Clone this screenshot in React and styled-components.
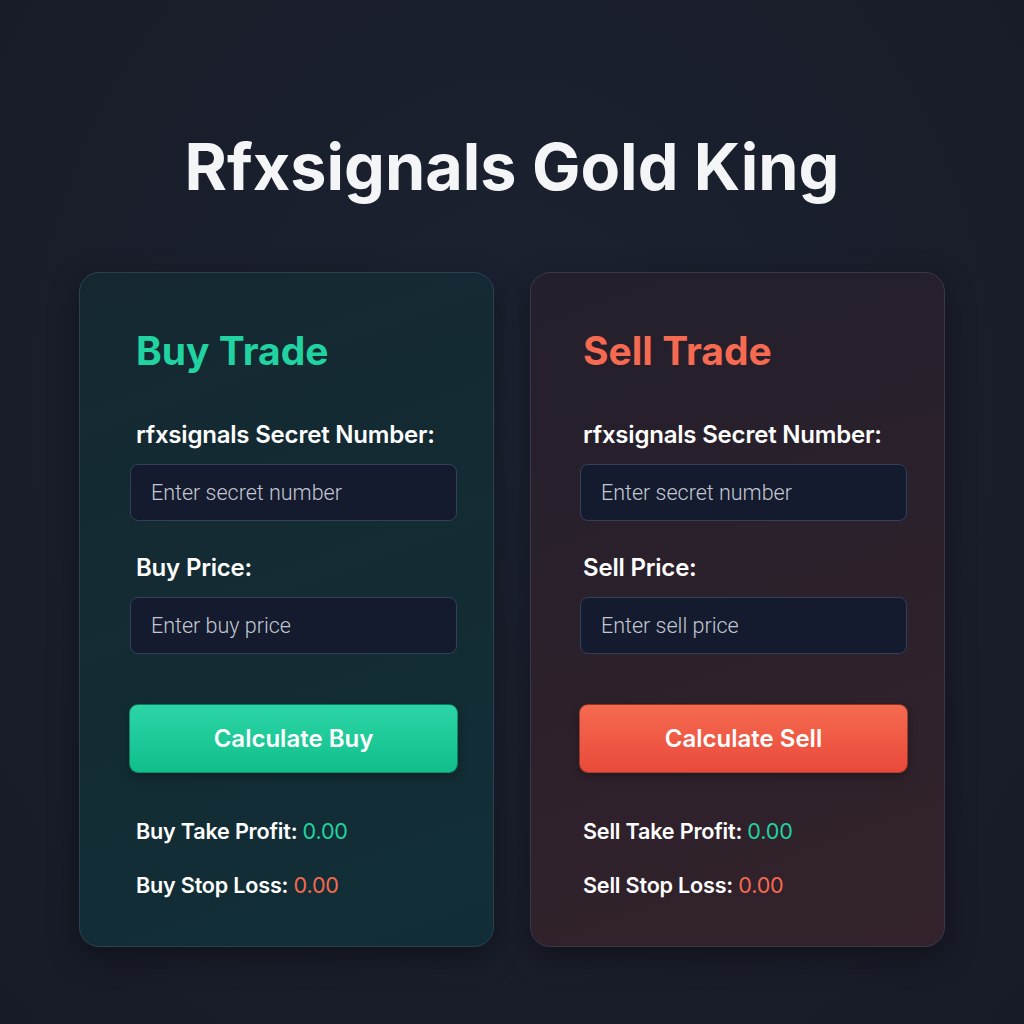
import React from 'react'
import styled, { createGlobalStyle } from 'styled-components'

const Global = createGlobalStyle`
  html, body {
    margin: 0;
    padding: 0;
    background: #1a1f2d;
  }
  body {
    font-family: Inter, "Noto Sans", sans-serif;
    color: #fff;
  }
`

const Page = styled.div`
  min-height: 1024px;
  display: flex;
  flex-direction: column;
  align-items: center;
  padding-top: 128px;
  box-sizing: border-box;
  background: radial-gradient(ellipse at 50% 40%, #1c2231 0%, #191d2a 70%, #171b27 100%);
`

const Title = styled.h1`
  margin: 0;
  font-size: 64.7px;
  line-height: 78px;
  font-weight: 700;
  color: #f4f5f7;
`

const Cards = styled.div`
  display: flex;
  gap: 36px;
  margin-top: 66px;
`

const Card = styled.div`
  width: 415px;
  height: 675px;
  box-sizing: border-box;
  padding: 55px 36px 0 ${({ side }) => (side === 'buy' ? '50px' : '49px')};
  border-radius: 20px;
  border: 1px solid ${({ side }) => (side === 'buy' ? '#2b4150' : '#3a3748')};
  background: ${({ side }) =>
    side === 'buy'
      ? 'linear-gradient(160deg, #152832 0%, #132c34 55%, #112e36 100%)'
      : 'linear-gradient(160deg, #231f2c 0%, #2c212b 55%, #33222b 100%)'};
  box-shadow: 0 10px 30px rgba(0, 0, 0, 0.35);
  display: flex;
  flex-direction: column;
`

const Heading = styled.h2`
  margin: 0 0 0 ${({ side }) => (side === 'buy' ? '6px' : '3px')};
  font-size: 39px;
  line-height: 46px;
  font-weight: 700;
  color: ${({ side }) => (side === 'buy' ? '#20d3a0' : '#f56a50')};
`

const Label = styled.label`
  display: block;
  margin: ${({ first }) => (first ? '46px' : '32px')} 0 14px ${({ side }) => (side === 'buy' ? '6px' : '3px')};
  font-size: 24px;
  line-height: 30px;
  font-weight: 600;
  letter-spacing: -0.2px;
  color: #fff;
`

const Input = styled.input`
  width: 327px;
  height: 57px;
  box-sizing: border-box;
  padding: 0 20px;
  border-radius: 8px;
  border: 1px solid #343f5e;
  background: #141b2e;
  color: #dfe3ea;
  font-family: Roboto, "Noto Sans", sans-serif;
  font-weight: 300;
  font-size: 21.5px;
  outline: none;
  &::placeholder {
    color: #c3c8d3;
  }
`

const Button = styled.button`
  margin-top: 50px;
  margin-left: -1px;
  width: 329px;
  height: 69px;
  border-radius: 9px;
  border: 1px solid rgba(0, 0, 0, 0.35);
  background: ${({ side }) =>
    side === 'buy'
      ? 'linear-gradient(180deg, #2dd5a6 0%, #0fbf8b 100%)'
      : 'linear-gradient(180deg, #f66b50 0%, #e9493a 100%)'};
  color: #fff;
  font-family: Inter, "Noto Sans", sans-serif;
  font-size: 24px;
  font-weight: 600;
  cursor: pointer;
  box-shadow: 0 4px 10px rgba(0, 0, 0, 0.25);
`

const Result = styled.p`
  margin: ${({ first }) => (first ? '45px' : '27px')} 0 0 ${({ side }) => (side === 'buy' ? '6px' : '3px')};
  font-size: 21.6px;
  line-height: 27px;
  font-weight: 600;
  letter-spacing: -0.2px;
  color: #fff;
`

const Value = styled.span`
  font-weight: 400;
  color: ${({ tone }) => (tone === 'profit' ? '#20d3a0' : '#f56a50')};
`

function TradeCard({ side }) {
  const name = side === 'buy' ? 'Buy' : 'Sell'
  const lower = name.toLowerCase()
  return (
    <Card side={side}>
      <Heading side={side}>{name} Trade</Heading>
      <Label side={side} first>rfxsignals Secret Number:</Label>
      <Input placeholder="Enter secret number" />
      <Label side={side}>{name} Price:</Label>
      <Input placeholder={`Enter ${lower} price`} />
      <Button side={side}>Calculate {name}</Button>
      <Result side={side} first>
        {name} Take Profit: <Value tone="profit">0.00</Value>
      </Result>
      <Result side={side}>
        {name} Stop Loss: <Value tone="loss">0.00</Value>
      </Result>
    </Card>
  )
}

export default function App() {
  return (
    <Page>
      <Global />
      <Title>Rfxsignals Gold King</Title>
      <Cards>
        <TradeCard side="buy" />
        <TradeCard side="sell" />
      </Cards>
    </Page>
  )
}
